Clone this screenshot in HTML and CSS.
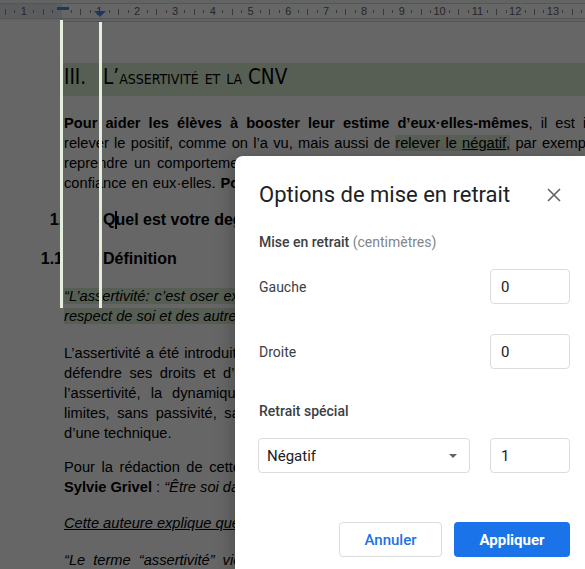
FILE: index.html
```html
<!DOCTYPE html>
<html lang="fr">
<head>
<meta charset="utf-8">
<title>Options de mise en retrait</title>
<link rel="stylesheet" href="styles.css">
</head>
<body>
<div class="doc">
  <div class="ruler-bar">
    <div class="ruler">
      <span class="cell">1</span><span class="cell"></span><span class="cell">1</span><span class="cell">2</span><span class="cell">3</span><span class="cell">4</span><span class="cell">5</span><span class="cell">6</span><span class="cell">7</span><span class="cell">8</span><span class="cell">9</span><span class="cell">10</span><span class="cell">11</span><span class="cell">12</span><span class="cell">13</span><span class="cell">14</span>
      <span class="marker-first"></span>
      <span class="marker-left"></span>
    </div>
  </div>
  <div class="page-edge"></div>

  <div class="page">
    <div class="h1"><span class="h1-num">III.</span><span class="h1-text">L’assertivité et la CNV</span></div>

    <div class="para p1">
      <div class="line ws-a"><b>Pour aider les élèves à booster leur estime d’eux·elles-mêmes</b>, il est important de</div>
      <div class="line ws-b">relever le positif, comme on l’a vu, mais aussi de <span class="hl">relever le <u>négatif,</u></span> par exemple</div>
      <div class="line ws-c">reprendre un comportement inadapté, afin de leur permettre de gagner en</div>
      <div class="line ws-d">confiance en eux·elles. <b>Pour cela, nous allons voir l’assertivité.</b></div>
    </div>

    <div class="h2 h2-first"><span class="h2-num">1.</span><span class="h2-text">Q<span class="caret"></span>uel est votre degré d’assertivité ?</span></div>
    <div class="h2 h2-second"><span class="h2-num">1.1</span><span class="h2-text">Définition</span></div>

    <div class="para quote">
      <div class="line ws-e"><span class="hl">“L’assertivité: c’est oser exprimer ce que l’on pense, ressent, veut, dans le</span></div>
      <div class="line"><span class="hl">respect de soi et des autres.”</span></div>
    </div>

    <div class="para p2">
      <div class="line ws-f">L’assertivité a été introduite dans les années 1950 comme la capacité à</div>
      <div class="line ws-g">défendre ses droits et d’exprimer ses besoins. On parle aujourd’hui de</div>
      <div class="line ws-h">l’assertivité, la dynamique de l’affirmation de soi qui permet de poser des</div>
      <div class="line ws-i">limites, sans passivité, sans agressivité et sans manipulation. Il s’agit</div>
      <div class="line">d’une technique.</div>
    </div>

    <div class="para p3">
      <div class="line ws-j">Pour la rédaction de cette partie, je me suis appuyée sur le livre de</div>
      <div class="line"><b>Sylvie Grivel</b> : <i>“Être soi dans ses relations”.</i></div>
    </div>

    <div class="para p4">
      <div class="line"><i><u>Cette auteure explique que l’assertivité est une compétence.</u></i></div>
    </div>

    <div class="para p5">
      <div class="line ws-k"><i>“Le terme “assertivité” vient de l’anglais “to assert” qui signifie</i></div>
    </div>
  </div>
</div>

<div class="backdrop"></div>
<div class="guide guide-left"></div>
<div class="guide guide-right"></div>

<div class="dialog">
  <div class="dlg-head">
    <div class="dlg-title">Options de mise en retrait</div>
    <div class="close">
      <svg width="14" height="14" viewBox="0 0 14 14"><path d="M1 1L13 13M13 1L1 13" stroke="#5f6368" stroke-width="1.6" fill="none"/></svg>
    </div>
  </div>

  <div class="section-label">Mise en retrait <span class="unit">(centimètres)</span></div>

  <div class="row row-first">
    <span class="label">Gauche</span>
    <div class="input">0</div>
  </div>
  <div class="row row-second">
    <span class="label">Droite</span>
    <div class="input">0</div>
  </div>

  <div class="section-label section-special">Retrait spécial</div>

  <div class="row row-select">
    <div class="select"><span>Négatif</span><span class="arrow"></span></div>
    <div class="input">1</div>
  </div>

  <div class="actions">
    <button class="btn btn-cancel">Annuler</button>
    <button class="btn btn-apply">Appliquer</button>
  </div>
</div>
</body>
</html>
```

FILE: styles.css
```css
html, body {
  margin: 0;
  padding: 0;
  width: 585px;
  height: 569px;
  overflow: hidden;
}

body {
  position: relative;
  background: #ffffff;
  font-family: "Liberation Sans", Arial, sans-serif;
  color: #000;
}

.doc {
  width: 585px;
  height: 569px;
  overflow: hidden;
}

/* ---------- ruler ---------- */
.ruler-bar {
  height: 21px;
  padding-top: 3px;
  box-sizing: border-box;
  background: #f6f7f8;
}

.ruler {
  position: relative;
  display: flex;
  height: 14px;
  padding-left: 4.9px;
  border-top: 1px solid #d3d5d8;
  border-bottom: 1px solid #d3d5d8;
  background: linear-gradient(to right, #e6e8eb 62px, #ffffff 62px);
  white-space: nowrap;
}

.cell {
  flex: 0 0 37.8px;
  text-align: center;
  font-size: 11px;
  line-height: 15px;
  color: #5f6368;
  background-image:
    linear-gradient(#8a8d91, #8a8d91),
    linear-gradient(#8a8d91, #8a8d91),
    linear-gradient(#8a8d91, #8a8d91);
  background-size: 1px 6px, 1px 3px, 1px 3px;
  background-position: 0 5px, 9.45px 6px, 28.35px 6px;
  background-repeat: no-repeat;
}

.marker-first {
  position: absolute;
  left: 57px;
  top: 3px;
  width: 12px;
  height: 3px;
  background: #4a89f3;
}

.marker-left {
  position: absolute;
  left: 94px;
  top: 7px;
  width: 0;
  height: 0;
  border-left: 6.5px solid transparent;
  border-right: 6.5px solid transparent;
  border-top: 6px solid #4a89f3;
}

.page-edge {
  height: 1px;
  margin-left: 62px;
  background: #c8d6c2;
}

/* ---------- page ---------- */
.page {
  width: 700px;
  font-size: 14.67px;
  line-height: 20px;
}

.h1 {
  display: flex;
  margin: 41px 0 0 62px;
  padding: 0 0 4px 2px;
  height: 29px;
  background: #d9ead3;
  font-family: "Liberation Sans Narrow", "Arial Narrow", "DejaVu Sans Condensed", sans-serif;
  font-size: 20.5px;
  line-height: 29px;
}

.h1-num {
  flex: none;
  width: 39px;
}

.h1-text {
  font-variant: small-caps;
}

.para {
  padding-left: 64px;
}

.line {
  white-space: nowrap;
}

.p1 { margin-top: 17px; }
.quote { margin-top: 15px; font-style: italic; }
.p2 { margin-top: 17px; }
.p3 { margin-top: 14px; }
.p4 { margin-top: 16px; }
.p5 { margin-top: 17px; }

.ws-a { word-spacing: 4px; }
.ws-b { word-spacing: 1.2px; }
.ws-c { word-spacing: 2.5px; }
.ws-d { word-spacing: 0.8px; }
.ws-e { word-spacing: 1px; }
.ws-f { word-spacing: 1px; }
.ws-g { word-spacing: 3.5px; }
.ws-h { word-spacing: 6px; }
.ws-i { word-spacing: 3.5px; }
.ws-j { word-spacing: 2.5px; }
.ws-k { word-spacing: 4px; }

.hl {
  background: #d9ead3;
}

.h2 {
  display: flex;
  font-weight: bold;
  font-size: 16px;
  line-height: 24px;
  white-space: nowrap;
}

.h2-first { margin-top: 15px; }
.h2-second { margin-top: 15px; }

.h2-num {
  flex: none;
  width: 63px;
  text-align: right;
}

.h2-text {
  margin-left: 40px;
}

.caret {
  display: inline-block;
  width: 2px;
  height: 18px;
  margin-right: -2px;
  vertical-align: -4px;
  background: #000;
}

/* ---------- overlay ---------- */
.backdrop {
  position: absolute;
  inset: 0;
  background: rgba(0, 0, 0, 0.6);
}

.guide {
  position: absolute;
  width: 3px;
  background: #e4f0dc;
}

.guide-left {
  left: 60px;
  top: 20px;
  height: 288px;
}

.guide-right {
  left: 99px;
  top: 22px;
  height: 286px;
}

/* ---------- dialog ---------- */
.dialog {
  position: absolute;
  left: 235px;
  top: 156px;
  width: 359px;
  box-sizing: border-box;
  padding: 25px 24px 24px 24px;
  background: #ffffff;
  border-radius: 8px;
  box-shadow: 0 4px 20px rgba(0, 0, 0, 0.3);
  font-family: Roboto, "Liberation Sans", sans-serif;
  color: #3c4043;
}

.dlg-head {
  display: flex;
  align-items: center;
  justify-content: space-between;
  height: 28px;
}

.dlg-title {
  font-size: 22px;
  line-height: 28px;
  color: #202124;
}

.close {
  width: 32px;
  height: 28px;
  display: flex;
  align-items: center;
  justify-content: center;
}

.section-label {
  margin-top: 23px;
  font-size: 14px;
  font-weight: 500;
  line-height: 20px;
  color: #3c4043;
}

.section-special {
  margin-top: 32px;
}

.unit {
  font-weight: 400;
  color: #80868b;
}

.row {
  display: flex;
  align-items: center;
  justify-content: space-between;
  height: 35px;
}

.row-first { margin-top: 17px; }
.row-second { margin-top: 30px; }
.row-select { margin-top: 17px; }

.label {
  font-size: 14px;
  color: #3c4043;
}

.input {
  display: flex;
  align-items: center;
  width: 80px;
  height: 35px;
  box-sizing: border-box;
  padding-left: 10px;
  border: 1px solid #dadce0;
  border-radius: 4px;
  font-size: 15px;
  color: #202124;
}

.select {
  display: flex;
  align-items: center;
  justify-content: space-between;
  width: 212px;
  height: 35px;
  margin-left: -1px;
  box-sizing: border-box;
  padding: 0 12px 0 8px;
  border: 1px solid #dadce0;
  border-radius: 4px;
  font-size: 15px;
  color: #202124;
}

.arrow {
  width: 0;
  height: 0;
  border-left: 4.5px solid transparent;
  border-right: 4.5px solid transparent;
  border-top: 4.5px solid #5f6368;
}

.actions {
  display: flex;
  justify-content: flex-end;
  gap: 12px;
  margin-top: 49px;
}

.btn {
  height: 35px;
  box-sizing: border-box;
  border-radius: 4px;
  font-family: Roboto, "Liberation Sans", sans-serif;
  font-size: 15px;
  font-weight: 500;
  padding: 0;
}

.btn-cancel {
  width: 103px;
  border: 1px solid #dadce0;
  background: #ffffff;
  color: #1a73e8;
}

.btn-apply {
  width: 116px;
  border: none;
  background: #1a73e8;
  color: #ffffff;
  font-weight: bold;
}
```
